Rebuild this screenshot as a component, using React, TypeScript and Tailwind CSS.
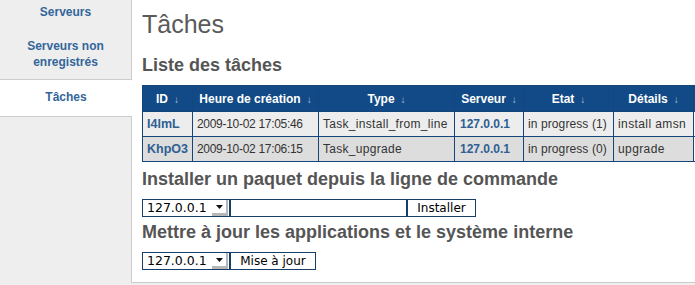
const rows = [
  {
    id: "I4lmL",
    date: "2009-10-02 17:05:46",
    type: "Task_install_from_line",
    server: "127.0.0.1",
    state: "in progress (1)",
    details: "install amsn",
    bg: "bg-[#ededed]",
  },
  {
    id: "KhpO3",
    date: "2009-10-02 17:06:15",
    type: "Task_upgrade",
    server: "127.0.0.1",
    state: "in progress (0)",
    details: "upgrade",
    bg: "bg-[#dddddd]",
  },
];

const headers = ["ID", "Heure de création", "Type", "Serveur", "Etat", "Détails"];

const ServerSelect = () => {
  return (
    <div className="flex h-[18px] w-[88px] shrink-0 items-stretch border border-[#173e68] bg-white">
      <span className="flex flex-1 items-center pl-[4px] text-[12.5px] leading-none text-black">
        127.0.0.1
      </span>
      <span className="mr-[1px] flex w-[16px] items-center justify-center border-r-2 border-b-[3px] border-[#b7b7b7] bg-white">
        <svg width="7" height="4" viewBox="0 0 7 4">
          <path d="M0 0h7L3.5 4z" fill="#111" />
        </svg>
      </span>
    </div>
  );
};

const App = () => {
  return (
    <div className="flex h-[285px] w-[695px] overflow-hidden bg-[#eeeeee] font-['Liberation_Sans',Arial,sans-serif]">
      <nav className="flex w-[131px] shrink-0 flex-col text-center text-[12px] font-bold leading-[16px] text-[#33669a]">
        <a className="block pt-[4px] pb-[9px]">Serveurs</a>
        <a className="block pt-[9px] pb-[9px]">
          Serveurs non
          <br />
          enregistrés
        </a>
        <a className="relative z-10 block w-[132px] border-y border-[#cccccc] bg-white pt-[9px] pb-[11px]">
          Tâches
        </a>
      </nav>

      <main className="h-[283px] flex-1 self-start border-b border-l border-[#cccccc] bg-white pl-[10px]">
        <h1 className="pt-[9px] text-[25px] leading-[30px] font-normal text-[#5a5a5a]">
          Tâches
        </h1>

        <h2 className="mt-[15px] text-[18px] leading-[22px] font-bold text-[#555555]">
          Liste des tâches
        </h2>

        <table className="mt-[9px] w-[611px] table-fixed border-collapse border border-[#14467c]">
          <colgroup>
            <col className="w-[50px]" />
            <col className="w-[126px]" />
            <col className="w-[136px]" />
            <col className="w-[69px]" />
            <col className="w-[90px]" />
            <col className="w-[80px]" />
            <col className="w-[60px]" />
          </colgroup>
          <thead>
            <tr className="h-[26px] bg-[#114a86] text-[12px] font-bold text-white">
              {headers.map((h) => (
                <th
                  key={h}
                  className="border border-[#14467c] px-[4px] text-center whitespace-nowrap"
                >
                  {h}
                  <span className="ml-[6px] text-[10px] font-normal text-[#b4c6da]">
                    ↓
                  </span>
                </th>
              ))}
              <th className="border border-[#14467c]" />
            </tr>
          </thead>
          <tbody className="text-[12px] text-[#333333]">
            {rows.map((r) => (
              <tr key={r.id} className={`h-[25px] ${r.bg}`}>
                <td className="border border-[#14467c] px-[4px] text-[12.5px] font-bold whitespace-nowrap text-[#2f5f93]">
                  {r.id}
                </td>
                <td className="border border-[#14467c] px-[4px] tracking-[-0.3px] whitespace-nowrap">
                  {r.date}
                </td>
                <td className="border border-[#14467c] px-[4px] tracking-[0.3px] whitespace-nowrap">
                  {r.type}
                </td>
                <td className="border border-[#14467c] px-[5px] font-bold whitespace-nowrap text-[#2f5f93]">
                  {r.server}
                </td>
                <td className="border border-[#14467c] px-[4px] tracking-[0.1px] whitespace-nowrap">
                  {r.state}
                </td>
                <td className="border border-[#14467c] px-[4px] tracking-[0.4px] whitespace-nowrap">
                  {r.details}
                </td>
                <td className="border border-[#14467c] bg-white" />
              </tr>
            ))}
          </tbody>
        </table>

        <h2 className="mt-[6px] text-[18px] leading-[22px] font-bold text-[#555555]">
          Installer un paquet depuis la ligne de commande
        </h2>

        <div className="mt-[9px] flex font-['DejaVu_Sans',sans-serif]">
          <ServerSelect />
          <input
            type="text"
            className="h-[18px] w-[177px] border border-[#173e68] bg-white outline-none"
          />
          <button className="h-[18px] w-[69px] border border-[#173e68] bg-white text-[12px] leading-none text-black">
            Installer
          </button>
        </div>

        <h2 className="mt-[4px] text-[18px] leading-[22px] font-bold text-[#555555]">
          Mettre à jour les applications et le système interne
        </h2>

        <div className="mt-[9px] flex font-['DejaVu_Sans',sans-serif]">
          <ServerSelect />
          <button className="h-[18px] w-[86px] border border-[#173e68] bg-white text-[12px] leading-none text-black">
            Mise à jour
          </button>
        </div>
      </main>
    </div>
  );
};

export default App;
